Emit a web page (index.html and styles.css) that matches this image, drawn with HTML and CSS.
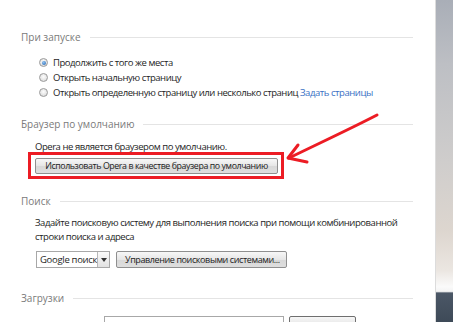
FILE: index.html
```html
<!DOCTYPE html>
<html lang="ru">
<head>
    <meta charset="UTF-8">
    <title>Настройки</title>
    <link rel="stylesheet" href="styles.css">
</head>
<body>

    <div class="page">
        <div class="content">

            <!-- При запуске -->
            <div class="section-title"><span>При запуске</span></div>
            <div class="radio-list">
                <label class="radio-row"><span class="radio checked"></span>Продолжить с того же места</label>
                <label class="radio-row"><span class="radio"></span>Открыть начальную страницу</label>
                <label class="radio-row"><span class="radio"></span>Открыть определенную страницу или несколько страниц <a href="#" class="link">Задать страницы</a></label>
            </div>

            <!-- Браузер по умолчанию -->
            <div class="section-title title-default"><span>Браузер по умолчанию</span></div>
            <div class="section-body">
                <p class="note">Opera не является браузером по умолчанию.</p>
                <div class="red-frame">
                    <button class="btn btn-wide">Использовать Opera в качестве браузера по умолчанию</button>
                </div>
            </div>

            <!-- Поиск -->
            <div class="section-title title-search"><span>Поиск</span></div>
            <div class="section-body">
                <p class="desc">Задайте поисковую систему для выполнения поиска при помощи комбинированной строки поиска и адреса</p>
                <div class="search-row">
                    <div class="select">
                        <span class="select-value">Google поиск</span>
                        <span class="select-arrow"></span>
                    </div>
                    <button class="btn btn-manage">Управление поисковыми системами...</button>
                </div>
            </div>

            <!-- Загрузки -->
            <div class="section-title title-downloads"><span>Загрузки</span></div>
            <div class="downloads-row">
                <div class="path-input"></div>
                <button class="btn btn-change"></button>
            </div>

            <!-- Red arrow drawn over the page -->
            <svg class="arrow" width="100" height="60" viewBox="0 0 100 60">
                <path d="M93 4 C70 16 40 30 5 47" stroke="#ec1c24" stroke-width="3" fill="none" stroke-linecap="round"/>
                <path d="M14 34 L4 47 L23 51" stroke="#ec1c24" stroke-width="3" fill="none" stroke-linecap="round" stroke-linejoin="round"/>
            </svg>
        </div>
        <div class="strip"></div>
    </div>

</body>
</html>
```

FILE: styles.css
```css
* {
    margin: 0;
    padding: 0;
    box-sizing: border-box;
}

body {
    font-family: 'Open Sans', 'Noto Sans', sans-serif;
    font-size: 9.5px;
    letter-spacing: -0.45px;
    color: #1e1e1e;
    background: #fff;
    overflow: hidden;
}

.page {
    display: flex;
    height: 322px;
}

.content {
    flex: 1;
    position: relative;
    padding: 29px 22px 0 21px;
}

/* Section headings with a thin rule */
.section-title {
    display: flex;
    align-items: center;
    gap: 9px;
    height: 16px;
    color: #7a7a7a;
    font-size: 10px;
    letter-spacing: 0;
    white-space: nowrap;
}

.section-title::after {
    content: '';
    flex: 1;
    height: 1px;
    background: #e4e4e4;
}

.title-default {
    margin-top: 16px;
}

.title-search {
    margin-top: 14px;
}

.title-downloads {
    margin-top: 22px;
}

.section-body {
    padding-left: 14px;
}

/* Radios */
.radio-list {
    margin-top: 10px;
    padding-left: 18px;
}

.radio-row {
    display: flex;
    align-items: center;
    height: 15px;
    white-space: nowrap;
}

.radio {
    width: 9px;
    height: 9px;
    border-radius: 50%;
    border: 1px solid #9a9a9a;
    background: radial-gradient(circle at 50% 40%, #fdfdfd, #d4d4d4);
    margin-right: 5px;
    position: relative;
}

.radio.checked::after {
    content: '';
    position: absolute;
    top: 1.5px;
    left: 1.5px;
    width: 4px;
    height: 4px;
    border-radius: 50%;
    background: radial-gradient(circle at 40% 35%, #8ec1f0, #1f5fae);
}

.link {
    color: #3a6fc4;
    text-decoration: none;
    margin-left: 2px;
}

/* Default browser */
.note {
    margin-top: 9px;
    line-height: 12px;
    white-space: nowrap;
}

.red-frame {
    display: inline-block;
    margin-top: -1px;
    margin-left: -7px;
    border: 3px solid #ec1c24;
    padding: 3px 3px 2px 4px;
}

.btn {
    font-family: inherit;
    font-size: 9px;
    letter-spacing: -0.4px;
    color: #222;
    height: 16px;
    padding: 0 8px;
    border: 1px solid #8f8f8f;
    border-radius: 2px;
    background: linear-gradient(#f7f7f7, #e6e6e6 50%, #d8d8d8 51%, #dedede);
    white-space: nowrap;
    display: block;
}

.btn-wide {
    width: 243px;
    font-size: 8.8px;
}

/* Search */
.desc {
    margin-top: 7px;
    line-height: 14px;
    width: 374px;
}

.search-row {
    display: flex;
    gap: 6px;
    margin-top: 7px;
}

.select {
    display: flex;
    width: 74px;
    height: 17px;
    border: 1px solid #a8a8a8;
    background: #fff;
    margin-left: 1px;
}

.select-value {
    flex: 1;
    padding-left: 3px;
    font-size: 9.5px;
    letter-spacing: -0.3px;
    line-height: 15px;
    white-space: nowrap;
}

.select-arrow {
    width: 13px;
    border-left: 1px solid #b8b8b8;
    background: linear-gradient(#fafafa, #e2e2e2);
    position: relative;
}

.select-arrow::after {
    content: '';
    position: absolute;
    top: 6px;
    left: 3px;
    border-left: 3px solid transparent;
    border-right: 3px solid transparent;
    border-top: 4px solid #333;
}

.btn-manage {
    height: 17px;
    width: 171px;
}

/* Downloads */
.downloads-row {
    display: flex;
    gap: 5px;
    margin-top: 10px;
    padding-left: 83px;
}

.path-input {
    width: 180px;
    height: 17px;
    border: 1px solid #a8a8a8;
}

.btn-change {
    width: 67px;
    height: 17px;
    border-color: #6f6f6f;
}

/* Red arrow over the content */
.arrow {
    position: absolute;
    left: 284px;
    top: 111px;
}

/* Desktop peeking through on the right */
.strip {
    width: 18px;
    border-left: 1px solid #dcdcdc;
    background: linear-gradient(#a9aeb7, #bdbfc4 20%, #cfcdcc 50%, #ddd6cf 72%, #ebe6e1 84%, #fafafa 89%, #f4f4f4 90.5%, #4b5766 91%, #3e4a58);
}
```
